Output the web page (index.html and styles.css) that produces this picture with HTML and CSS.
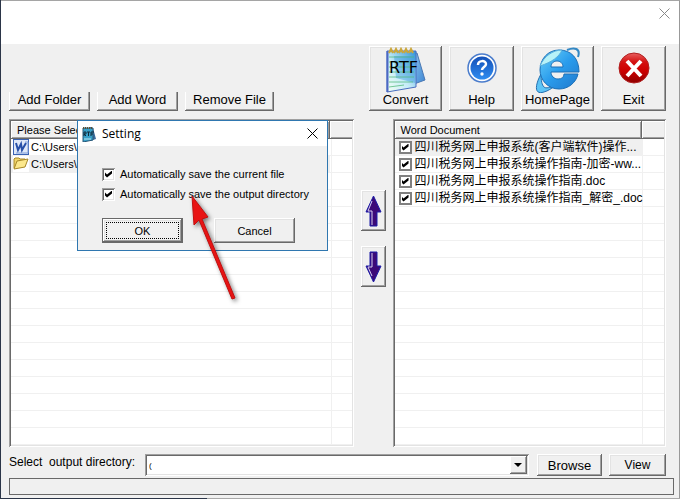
FILE: index.html
```html
<!DOCTYPE html>
<html lang="en">

<head>
    <meta charset="UTF-8">
    <meta name="viewport" content="width=device-width, initial-scale=1.0">
    <title>Word to RTF Converter</title>
    <link rel="stylesheet" href="styles.css">
</head>

<body>
    <div class="window">
        <header class="titlebar">
            <button class="close" aria-label="Close">
                <svg width="11" height="11" viewBox="0 0 11 11"><path d="M.5 .5l10 10M10.5 .5l-10 10" fill="none" stroke="#888"/></svg>
            </button>
        </header>

        <!-- Toolbar -->
        <div class="toolbar">
            <div class="file-buttons">
                <button class="btn btn-flat">Add Folder</button>
                <button class="btn btn-flat">Add Word</button>
                <button class="btn btn-flat btn-remove">Remove File</button>
            </div>
            <div class="tool-buttons">
                <button class="btn tool tool-wide">
                    <svg width="42" height="46" viewBox="0 0 42 46">
                        <defs>
                            <linearGradient id="page" x1="0" y1="1" x2="1" y2="0">
                                <stop offset="0" stop-color="#f4fff4"/>
                                <stop offset=".45" stop-color="#c4ecf8"/>
                                <stop offset="1" stop-color="#2f93d8"/>
                            </linearGradient>
                            <linearGradient id="back" x1="0" y1="0" x2="1" y2="1">
                                <stop offset="0" stop-color="#8cc4ec"/>
                                <stop offset="1" stop-color="#3d86d4"/>
                            </linearGradient>
                        </defs>
                        <path d="M28 6l4 0 8 27-11 4z" fill="url(#back)" stroke="#4a78b4"/>
                        <path d="M2 4h29v36L2 45z" fill="url(#page)" stroke="#4a6fc0"/>
                        <path d="M9 9h21v27l-19-5z" fill="#3f9be0" opacity=".45"/>
                        <path d="M4 10h25M4 15h25M4 20h25M4 25h25M4 30h25M4 35h24M4 40l15-2" stroke="#4fb878" opacity=".75"/>
                        <path d="M2.500 4v41" stroke="#4c68c4" stroke-width="2"/>
                        <path d="M4 6l2-4 2 4M9 6l2-4 2 4M14 6l2-4 2 4M19 6l2-4 2 4M24 6l2-4 2 4" fill="none" stroke="#caa63c" stroke-width="2"/>
                        <text x="4" y="26" class="rtf">RTF</text>
                    </svg>
                    <span>Convert</span>
                </button>
                <button class="btn tool">
                    <svg width="40" height="46" viewBox="0 0 40 46">
                        <defs>
                            <linearGradient id="help" x1="0" y1="0" x2="0" y2="1">
                                <stop offset="0" stop-color="#1450b8"/>
                                <stop offset="1" stop-color="#2f8cf0"/>
                            </linearGradient>
                        </defs>
                        <circle cx="20" cy="21" r="14" fill="#fff" stroke="#4a7ccc" stroke-width="1.500"/>
                        <circle cx="20" cy="21" r="11.500" fill="url(#help)"/>
                        <path d="M16 18c0-5 8-5 8-1 0 3-4 3-4 6" fill="none" stroke="#fff" stroke-width="2.500"/>
                        <circle cx="20" cy="27" r="1.700" fill="#fff"/>
                    </svg>
                    <span>Help</span>
                </button>
                <button class="btn tool tool-wide">
                    <svg width="46" height="46" viewBox="0 0 46 46">
                        <defs>
                            <linearGradient id="globe" x1="0" y1="0" x2="1" y2="1">
                                <stop offset="0" stop-color="#6cd2fa"/>
                                <stop offset=".5" stop-color="#2a9cec"/>
                                <stop offset="1" stop-color="#1f78cc"/>
                            </linearGradient>
                        </defs>
                        <path d="M6 27C-1 40 0 48 9 45c4-1 8-4 11-6-5 1-9 3-11 1-2-2-3-6-3-13z" fill="#5cc4f6" stroke="#246fb0"/>
                        <path d="M24 3C13 3 5 12 5 23c0 10 8 19 19 19 9 0 17-6 19-15H29c0 3-2 5-6 5s-7-3-7-7h28C44 11 36 3 24 3zM16 20c0-4 3-6 6-6s6 2 6 6z" fill="url(#globe)" stroke="#1c6fb6" fill-rule="evenodd"/>
                        <path d="M5 19C9 9 18 3 27 3c-3 7-10 12-22 16z" fill="#b8f2f8" stroke="#58aedc"/>
                        <path d="M32 3c7-3 14-2 11 7" fill="none" stroke="#3488c4" stroke-width="2"/>
                    </svg>
                    <span>HomePage</span>
                </button>
                <button class="btn tool">
                    <svg width="40" height="46" viewBox="0 0 40 46">
                        <defs>
                            <linearGradient id="exit" x1="0" y1="0" x2="0" y2="1">
                                <stop offset="0" stop-color="#e86060"/>
                                <stop offset=".3" stop-color="#d41010"/>
                                <stop offset=".6" stop-color="#c00"/>
                                <stop offset="1" stop-color="#8e0000"/>
                            </linearGradient>
                        </defs>
                        <circle cx="20" cy="21" r="15" fill="url(#exit)" stroke="#b02020"/>
                        <path d="M13 14l14 15M27 14L13 29" stroke="#fff" stroke-width="4"/>
                    </svg>
                    <span>Exit</span>
                </button>
            </div>
        </div>

        <!-- File lists -->
        <main class="lists">
            <div class="list list-source">
                <table>
                    <colgroup><col><col class="col-rest"></colgroup>
                    <thead>
                        <tr><th>Please Select</th><th></th></tr>
                    </thead>
                    <tbody>
                        <tr>
                            <td><div class="cell">
                                <svg width="16" height="16" viewBox="0 0 16 16">
                                    <rect x=".5" y=".5" width="15" height="15" fill="#dfe8f8" stroke="#3c64b4"/>
                                    <path d="M12 3h3v11H3" fill="none" stroke="#7c9cd8"/>
                                    <path d="M3 4l2 7 3-6 1 6 4-7" fill="none" stroke="#2850a8" stroke-width="2"/>
                                </svg>
                                <span>C:\Users\</span>
                            </div></td>
                            <td></td>
                        </tr>
                        <tr class="selected">
                            <td><div class="cell">
                                <svg width="16" height="16" viewBox="0 0 16 16">
                                    <rect width="16" height="16" fill="#fff"/>
                                    <path d="M1 12V3l1-1h4l1 1h5v3" fill="#f0d468" stroke="#a88828"/>
                                    <path d="M1 13L4 5l11-2-3 8z" fill="#fce88c" stroke="#a88828"/>
                                </svg>
                                <span>C:\Users\</span>
                            </div></td>
                            <td></td>
                        </tr>
                    </tbody>
                </table>
            </div>

            <div class="movers">
                <button class="btn mover" aria-label="Move up">
                    <svg width="17" height="32" viewBox="0 0 17 32">
                        <path d="M8.500 1L16 17h-4v14H5V17H1z" fill="#3c0a78" stroke="#1c1ca8"/>
                        <path d="M7 6L3 16h4v14" fill="none" stroke="#d4d0f4"/>
                    </svg>
                </button>
                <button class="btn mover" aria-label="Move down">
                    <svg width="17" height="32" viewBox="0 0 17 32">
                        <path d="M8.500 31L16 15h-4V1H5v14H1z" fill="#3c0a78" stroke="#1c1ca8"/>
                        <path d="M7 2v14H3l4 9" fill="none" stroke="#d4d0f4"/>
                    </svg>
                </button>
            </div>

            <div class="list list-word">
                <table>
                    <colgroup><col><col class="col-rest"></colgroup>
                    <thead>
                        <tr><th>Word Document</th><th></th></tr>
                    </thead>
                    <tbody>
                        <tr class="selected">
                            <td><label class="cell"><input type="checkbox" class="check check-flat" checked><span class="name">四川税务网上申报系统(客户端软件)操作...</span></label></td>
                            <td></td>
                        </tr>
                        <tr>
                            <td><label class="cell"><input type="checkbox" class="check check-flat" checked><span class="name">四川税务网上申报系统操作指南-加密-ww...</span></label></td>
                            <td></td>
                        </tr>
                        <tr>
                            <td><label class="cell"><input type="checkbox" class="check check-flat" checked><span class="name">四川税务网上申报系统操作指南.doc</span></label></td>
                            <td></td>
                        </tr>
                        <tr>
                            <td><label class="cell"><input type="checkbox" class="check check-flat" checked><span class="name">四川税务网上申报系统操作指南_解密_.doc</span></label></td>
                            <td></td>
                        </tr>
                    </tbody>
                </table>
            </div>
        </main>

        <!-- Output directory -->
        <div class="output">
            <label for="directory">Select &nbsp;output directory:</label>
            <div class="combo">
                <select id="directory">
                    <option>(</option>
                </select>
            </div>
            <button class="btn btn-browse">Browse</button>
            <button class="btn btn-view">View</button>
        </div>
        <div class="progress"></div>

        <!-- Setting dialog -->
        <div class="dialog" role="dialog" aria-labelledby="dialogTitle">
            <div class="dialog-title">
                <svg width="14" height="16" viewBox="0 0 14 16">
                    <path d="M8 1l3 1 3 11-6 2z" fill="#3c6c9c"/>
                    <path d="M1 2h10v12L1 16z" fill="#38a0c8" stroke="#285878"/>
                    <path d="M1 2h10" stroke="#5c5030" stroke-width="2" stroke-dasharray="1 1"/>
                    <path d="M2 13h7" stroke="#b8e8f4"/>
                    <path d="M2 10V6h2v2H2l2 2M5 6h3M6.500 6v4M9 10V6h3M9 8h2" fill="none" stroke="#102838"/>
                </svg>
                <span id="dialogTitle">Setting</span>
                <button class="close" aria-label="Close">
                    <svg width="11" height="11" viewBox="0 0 11 11"><path d="M.5 .5l10 10M10.5 .5l-10 10" fill="none" stroke="#000"/></svg>
                </button>
            </div>
            <div class="dialog-body">
                <label class="option"><input type="checkbox" class="check" checked><span>Automatically save the current file</span></label>
                <label class="option"><input type="checkbox" class="check" checked><span>Automatically save the output directory</span></label>
                <div class="dialog-buttons">
                    <button class="btn btn-dialog btn-default">OK</button>
                    <button class="btn btn-dialog">Cancel</button>
                </div>
            </div>
        </div>

        <svg class="pointer" width="60" height="116" viewBox="0 0 60 116">
            <path d="M6 2l2 29 5-5 33 79 3-1-33-79 6-2z" fill="#e81414" stroke="#c01010"/>
        </svg>
    </div>
</body>

</html>
```

FILE: styles.css
```css
* {
    box-sizing: border-box;
}

body {
    margin: 0;
    min-height: 100vh;
    display: flex;
    padding: 0 0 1px 1px;
    font-family: "Liberation Sans", Arial, sans-serif;
    font-size: 11px;
    color: #000;
    background: linear-gradient(90deg, #2b3548 207px, #a8a8a8 207px);
}

button, select, input {
    font: inherit;
    color: inherit;
    margin: 0;
    padding: 0;
}

svg {
    display: block;
    flex: none;
}

.window {
    position: relative;
    flex: 1;
    min-width: 0;
    display: flex;
    flex-direction: column;
    background: #f0f0f0;
    border-top: 1px solid #a5a5a5;
    border-right: 1px solid #999;
}

.titlebar {
    display: flex;
    justify-content: flex-end;
    align-items: flex-start;
    height: 43px;
    padding: 7px 9px;
    background: #fff;
}

.close {
    border: 0;
    background: none;
}

/* Raised buttons */
.btn {
    border: 0;
    background: #f0f0f0;
    white-space: nowrap;
    box-shadow: inset -1px -1px #696969, inset 1px 1px #fff, inset -2px -2px #a0a0a0, inset 2px 2px #e3e3e3;
}

.toolbar {
    display: flex;
    justify-content: space-between;
    align-items: flex-end;
    padding: 2px 13px 8px 8px;
}

.file-buttons, .tool-buttons {
    display: flex;
    gap: 7px;
    font-size: 13px;
}

.btn-flat {
    width: 81px;
    height: 19px;
    padding-bottom: 4px;
    line-height: 15px;
    box-shadow: inset -1px -1px #696969, inset 1px 0 #fff, inset -2px -2px #a0a0a0;
}

.btn-remove {
    width: 89px;
}

.tool {
    display: flex;
    flex-direction: column;
    align-items: center;
    width: 65px;
    height: 65px;
    padding-top: 1px;
    line-height: 14px;
}

.tool-wide {
    width: 73px;
}

.rtf {
    font-family: "DejaVu Sans", sans-serif;
    font-size: 16px;
}

/* Lists */
.lists {
    flex: 1;
    display: flex;
    padding: 0 13px 0 8px;
}

.list {
    min-width: 0;
    padding: 2px;
    background: #fff;
    box-shadow: inset 1px 1px #a0a0a0, inset -1px -1px #fff, inset 2px 2px #696969, inset -2px -2px #e3e3e3;
}

.list-source {
    flex: 345;
    background: linear-gradient(#f0f0f0, #f0f0f0) right 22px top 2px / 1px 100% no-repeat, repeating-linear-gradient(#fff 0 16px, #f0f0f0 16px 17px) 0 20px;
}

.list-word {
    flex: 273;
    background: linear-gradient(#f0f0f0, #f0f0f0) right 23px top 2px / 1px 100% no-repeat, repeating-linear-gradient(#fff 0 16px, #f0f0f0 16px 17px) 0 20px;
}

.list table {
    width: 100%;
    table-layout: fixed;
    border-collapse: separate;
    border-spacing: 0;
}

.col-rest {
    width: 22px;
}

.list th {
    height: 18px;
    padding: 0 0 0 6px;
    font-weight: normal;
    text-align: left;
    line-height: 16px;
    background: #f0f0f0;
    box-shadow: inset -1px -1px #696969, inset 1px 1px #fff, inset -2px -2px #a0a0a0;
}

.list th:last-child {
    box-shadow: inset 0 -1px #696969, inset 1px 1px #fff, inset 0 -2px #a0a0a0;
}

.list td {
    height: 17px;
    padding: 0;
    border-bottom: 1px solid #f0f0f0;
}

.selected td:first-child {
    background: #f0f0f0;
}

.cell {
    display: flex;
    align-items: center;
    gap: 2px;
    height: 16px;
    padding-left: 2px;
    line-height: 16px;
    white-space: nowrap;
}

.list-word .cell {
    gap: 3px;
    padding-left: 4px;
}

.name {
    font-family: "Liberation Sans", "Noto Sans CJK SC", sans-serif;
    font-size: 12px;
}

.movers {
    display: flex;
    flex-direction: column;
    gap: 15px;
    width: 39px;
    padding: 71px 7px 0;
}

.mover {
    display: flex;
    justify-content: center;
    align-items: center;
    width: 25px;
    height: 41px;
}

/* Checkboxes */
.check {
    appearance: none;
    flex: none;
    width: 13px;
    height: 13px;
    padding: 3px;
    background: #fff;
    box-shadow: inset 1px 1px #a0a0a0, inset -1px -1px #fff, inset 2px 2px #696969, inset -2px -2px #e3e3e3;
}

.check-flat {
    box-shadow: inset 0 0 0 2px #808080;
}

.check:checked::before {
    content: "";
    display: block;
    width: 7px;
    height: 7px;
    background: #000;
    clip-path: polygon(0 2px, 2px 4px, 7px 0, 7px 3px, 2px 7px, 0 5px);
}

/* Output row */
.output {
    display: flex;
    padding: 7px 13px 0 8px;
    font-size: 12px;
}

.output label {
    width: 136px;
    line-height: 16px;
    white-space: nowrap;
}

.combo {
    position: relative;
    flex: 1;
    height: 22px;
    padding: 2px;
    background: #fff;
    box-shadow: inset 1px 1px #a0a0a0, inset -1px -1px #fff, inset 2px 2px #696969, inset -2px -2px #e3e3e3;
}

.combo select {
    appearance: none;
    display: block;
    width: 100%;
    height: 18px;
    padding-left: 2px;
    border: 0;
    background: none;
    font-size: 8px;
}

.combo::before {
    content: "";
    position: absolute;
    top: 2px;
    right: 2px;
    width: 17px;
    height: 18px;
    background: #f0f0f0;
    box-shadow: inset -1px -1px #696969, inset 1px 1px #fff, inset -2px -2px #a0a0a0;
    pointer-events: none;
}

.combo::after {
    content: "";
    position: absolute;
    top: 9px;
    right: 7px;
    border: 4px solid transparent;
    border-top-color: #000;
    border-bottom: 0;
    pointer-events: none;
}

.btn-browse {
    width: 65px;
    height: 22px;
    margin: 0 7px 0 8px;
    font-size: 13px;
}

.btn-view {
    width: 57px;
    height: 22px;
}

.progress {
    height: 17px;
    margin: 2px 5px 3px 8px;
    border: 1px solid #696969;
}

/* Setting dialog */
.dialog {
    position: absolute;
    top: 119px;
    left: 76px;
    width: 251px;
    background: #f0f0f0;
    border: 1px solid #2f77b0;
}

.dialog-title {
    display: flex;
    align-items: center;
    height: 25px;
    padding: 0 9px 0 4px;
    background: #fff;
    font-family: "Open Sans", sans-serif;
    font-size: 12px;
}

.dialog-title .close {
    margin-left: auto;
}

.dialog-title span {
    margin-left: 6px;
}

.dialog-body {
    padding: 18px 24px 7px;
}

.option {
    display: flex;
    align-items: center;
    gap: 5px;
    height: 20px;
    white-space: nowrap;
}

.dialog-buttons {
    display: flex;
    gap: 31px;
    padding-top: 14px;
}

.btn-dialog {
    width: 81px;
    height: 25px;
}

.btn-default {
    border: 1px solid #696969;
    outline: 1px dotted #000;
    outline-offset: -5px;
}

.pointer {
    position: absolute;
    top: 193px;
    left: 185px;
    filter: drop-shadow(2px 2px 2px rgba(0, 0, 0, 0.5));
    pointer-events: none;
}
```
